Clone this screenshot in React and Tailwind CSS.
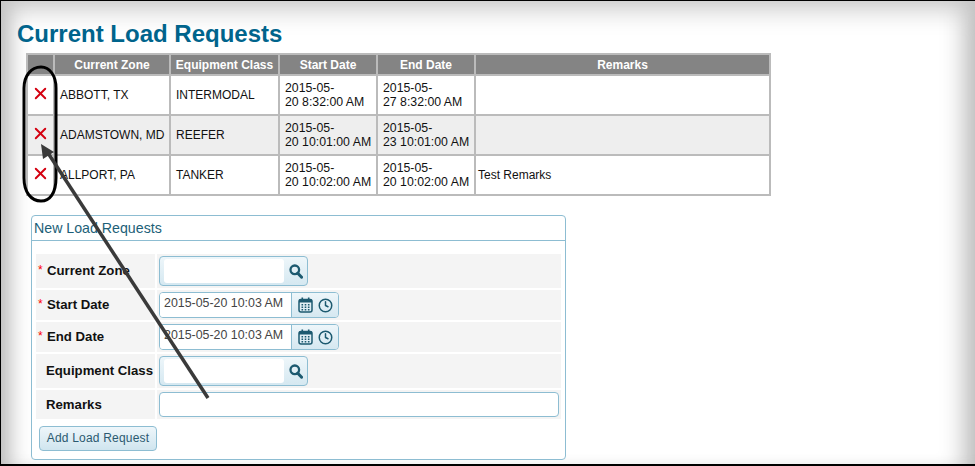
import { Clock, X } from "lucide-react";

const rows = [
  { zone: "ABBOTT, TX", cls: "INTERMODAL", start: ["2015-05-", "20 8:32:00 AM"], end: ["2015-05-", "27 8:32:00 AM"], remarks: "" },
  { zone: "ADAMSTOWN, MD", cls: "REEFER", start: ["2015-05-", "20 10:01:00 AM"], end: ["2015-05-", "23 10:01:00 AM"], remarks: "" },
  { zone: "ALLPORT, PA", cls: "TANKER", start: ["2015-05-", "20 10:02:00 AM"], end: ["2015-05-", "20 10:02:00 AM"], remarks: "Test Remarks" },
];

const headers = ["", "Current Zone", "Equipment Class", "Start Date", "End Date", "Remarks"];

const CalendarIcon = () => (
  <svg width="15" height="16" viewBox="0 0 15 16" className="text-[#1d5a70]">
    <rect x="1" y="2.5" width="13" height="12.5" rx="2" fill="none" stroke="currentColor" strokeWidth="1.5" />
    <rect x="1" y="2.5" width="13" height="3" fill="currentColor" />
    <rect x="3.5" y="0.5" width="1.6" height="3" fill="currentColor" />
    <rect x="9.9" y="0.5" width="1.6" height="3" fill="currentColor" />
    <path d="M3.5 7h1.6v1.5H3.5zM6.7 7h1.6v1.5H6.7zM9.9 7h1.6v1.5H9.9zM3.5 9.5h1.6V11H3.5zM6.7 9.5h1.6V11H6.7zM9.9 9.5h1.6V11H9.9zM3.5 12h1.6v1.5H3.5zM6.7 12h1.6v1.5H6.7zM9.9 12h1.6v1.5H9.9z" fill="currentColor" />
  </svg>
);

const SearchIcon = () => (
  <svg width="14" height="15" viewBox="0 0 14 15" fill="none" className="text-[#1d5a70]">
    <circle cx="5.8" cy="5.8" r="4.3" stroke="currentColor" strokeWidth="2.3" />
    <path d="M8.8 9.2 L12.6 13.2" stroke="currentColor" strokeWidth="3" strokeLinecap="round" />
  </svg>
);

const LookupField = () => (
  <div className="flex items-center w-[149px] h-[30px] pl-[4px] border border-[#8dbdd2] rounded-[4px] bg-gradient-to-b from-[#eef6fa] to-[#d5e8f1]">
    <div className="w-[120px] h-[24px] bg-white rounded-[3px]" />
    <div className="flex-1 flex justify-center pl-[1px]">
      <SearchIcon />
    </div>
  </div>
);

const DateField = () => (
  <div className="flex w-[180px] h-[26px] border border-[#8dbdd2] rounded-[4px] overflow-hidden">
    <div className="w-[131px] pl-[4px] bg-white text-[12.4px] text-[#444] leading-[21px] whitespace-nowrap">2015-05-20 10:03 AM</div>
    <div className="flex-1 flex items-center gap-[5px] pl-[6px] border-l border-[#8dbdd2] bg-gradient-to-b from-[#eef6fa] to-[#d5e8f1]">
      <CalendarIcon />
      <Clock size={15} strokeWidth={2.4} className="text-[#1d5a70]" />
    </div>
  </div>
);

const FormRow = ({ label, required, height, children }) => (
  <div className={`flex gap-[2px] mb-[2px] ${height}`}>
    <div className="w-[119px] flex items-center bg-[#f4f4f4] pl-[2px] text-[13.2px] font-bold text-[#111]">
      <span className={`text-[#f00] font-normal text-[12px] -mt-[3px] ${required ? "w-[9px]" : "w-[8px]"}`}>{required ? "*" : ""}</span>
      <span className="whitespace-nowrap">{label}</span>
    </div>
    <div className="flex-1 flex items-center bg-[#f4f4f4] pl-[2px]">{children}</div>
  </div>
);

export default function App() {
  return (
    <div className="relative w-[975px] h-[466px] overflow-hidden bg-white border-t border-l border-b-2 border-black font-['Liberation_Sans',Arial,sans-serif] shadow-[inset_0_26px_26px_-18px_#c8c8c8,inset_22px_0_22px_-14px_#b4b4b4,inset_-26px_0_24px_-16px_#b8b8b8]">
      <h1 className="ml-[16px] mt-[18px] text-[24px] leading-[30px] font-bold text-[#00648c]">Current Load Requests</h1>

      <table className="ml-[25px] mt-[4px] w-[745px] table-fixed border-collapse text-[12px] text-[#111]">
        <colgroup>
          <col className="w-[27px]" />
          <col className="w-[116px]" />
          <col className="w-[109px]" />
          <col className="w-[98px]" />
          <col className="w-[98px]" />
          <col />
        </colgroup>
        <thead>
          <tr className="h-[21px]">
            {headers.map((h, i) => (
              <th key={i} className="border-2 border-[#bbb] bg-[#848484] text-white font-bold p-0">{h}</th>
            ))}
          </tr>
        </thead>
        <tbody>
          {rows.map((r, i) => (
            <tr key={r.zone} className={`h-[40px] ${i === 1 ? "bg-[#eee]" : "bg-white"}`}>
              <td className="border-2 border-[#bbb] p-0">
                <X size={19} strokeWidth={2.4} className="mx-auto -mt-[3px] text-[#d40010]" />
              </td>
              <td className="border-2 border-[#bbb] px-[5px] py-0 whitespace-nowrap">{r.zone}</td>
              <td className="border-2 border-[#bbb] px-[5px] py-0">{r.cls}</td>
              <td className="border-2 border-[#bbb] pl-[5px] py-0 text-[12.3px] leading-[14px] whitespace-nowrap">{r.start[0]}<br />{r.start[1]}</td>
              <td className="border-2 border-[#bbb] pl-[5px] py-0 text-[12.3px] leading-[14px] whitespace-nowrap">{r.end[0]}<br />{r.end[1]}</td>
              <td className="border-2 border-[#bbb] px-[2px] py-0">{r.remarks}</td>
            </tr>
          ))}
        </tbody>
      </table>

      <div className="ml-[30px] mt-[19px] w-[535px] h-[245px] border border-[#8dbdd2] rounded-[4px] bg-white">
        <div className="h-[25px] pl-[2px] border-b border-[#8dbdd2] text-[14.2px] leading-[24px] text-[#1d5f78]">New Load Requests</div>
        <div className="pt-[13px] px-[4px]">
          <FormRow label="Current Zone" required height="h-[34px]"><LookupField /></FormRow>
          <FormRow label="Start Date" required height="h-[30px]"><DateField /></FormRow>
          <FormRow label="End Date" required height="h-[30px]"><DateField /></FormRow>
          <FormRow label="Equipment Class" height="h-[34px]"><LookupField /></FormRow>
          <FormRow label="Remarks" height="h-[29px]">
            <div className="w-[400px] h-[25px] border border-[#8dbdd2] rounded-[4px] bg-white" />
          </FormRow>
          <button className="ml-[3px] mt-[5px] w-[118px] h-[25px] pb-[2px] border border-[#8dbdd2] rounded-[4px] bg-gradient-to-b from-[#eef6fa] to-[#d0e5ef] text-[12px] tracking-[0.2px] text-[#2b5a70]">Add Load Request</button>
        </div>
      </div>

      {/* hand drawn callout on top of the screenshot */}
      <svg className="absolute left-[-1px] top-[-1px] pointer-events-none" width="975" height="466" viewBox="0 0 975 466" fill="none">
        <path d="M41 67 C50 67 56 76 56 88 L56 178 C56 193 50 201 41 201 C31 201 24 192 24 178 L24 88 C24 76 31 67 41 67 Z" stroke="#000" strokeWidth="3" />
        <path d="M208 398 L48 153" stroke="#3a3a3a" strokeWidth="3.5" />
        <path d="M41 144 L54 152 L43 159 Z" fill="#3a3a3a" />
      </svg>
    </div>
  );
}
